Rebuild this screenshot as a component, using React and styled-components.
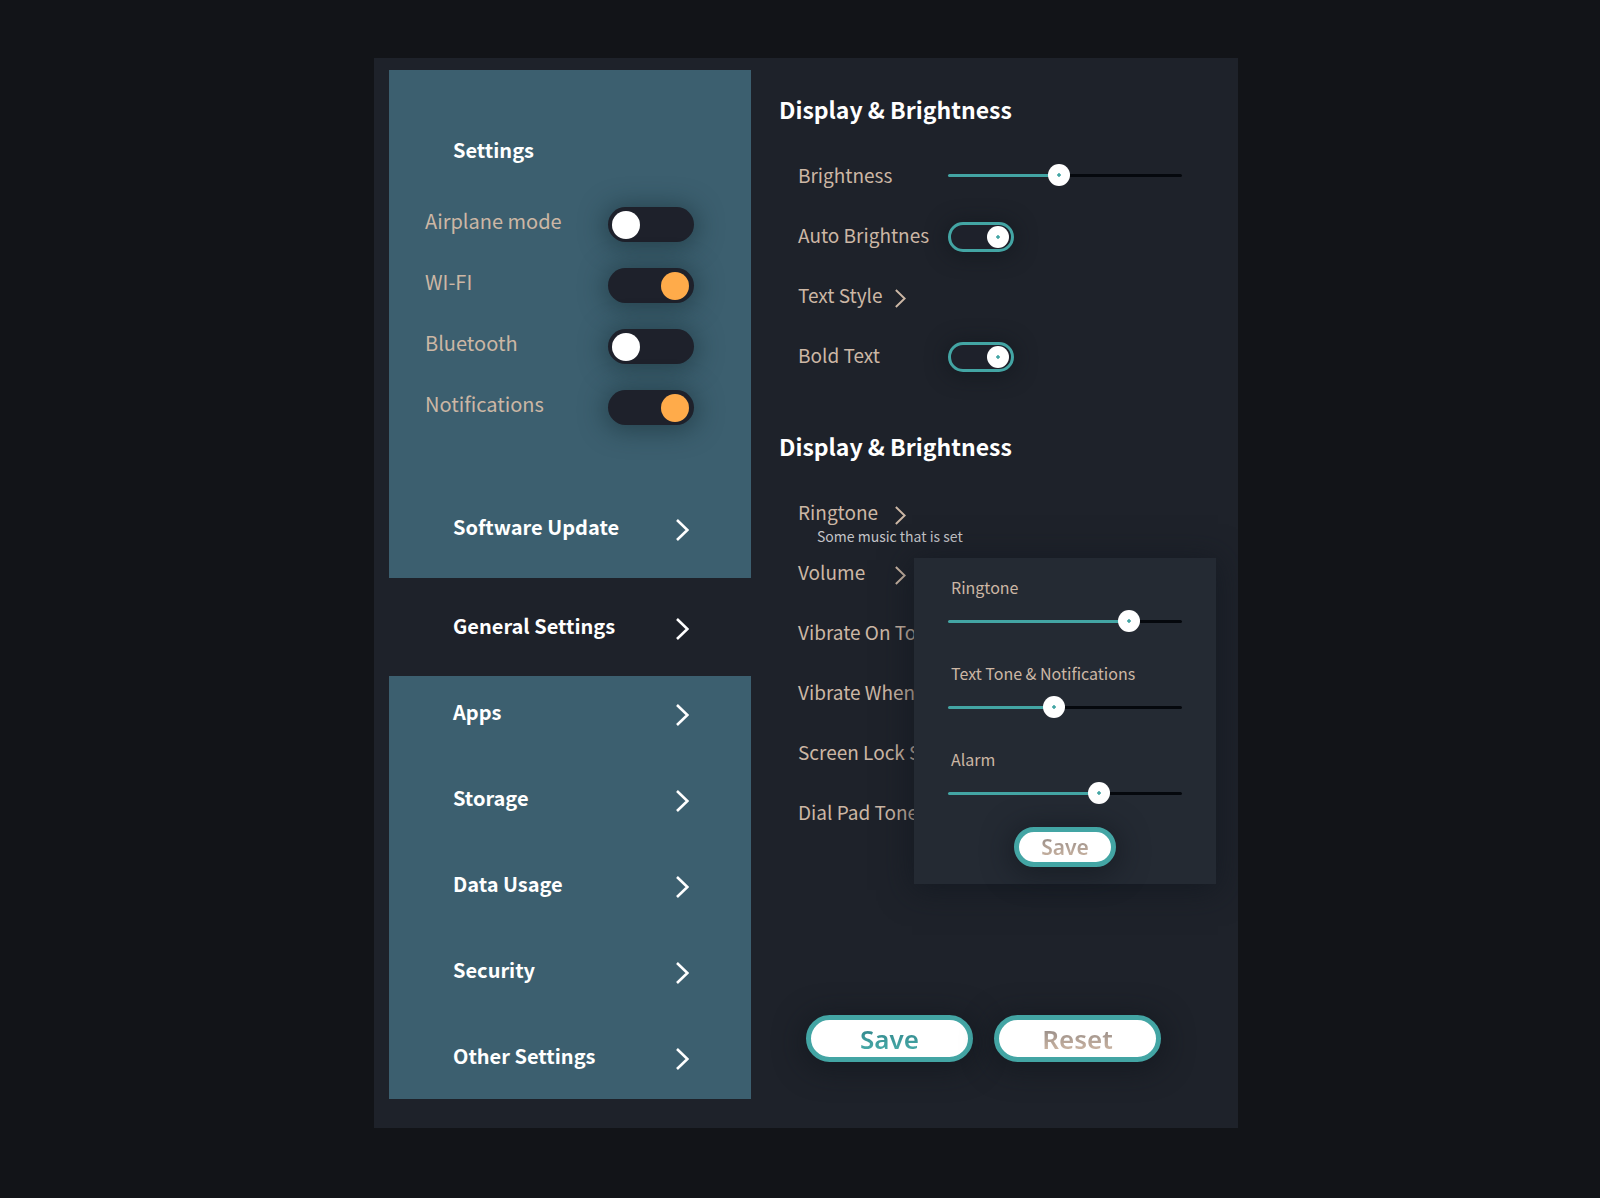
import React, { useId, useState } from "react";
import styled, { createGlobalStyle, css } from "styled-components";

const GlobalStyle = createGlobalStyle`
  *, *::before, *::after { box-sizing: border-box; }
  body {
    margin: 0;
    background: #121418;
    font-family: "Noto Sans CJK SC", "Noto Sans", sans-serif;
    color: #ccb7a5;
  }
  h1, h2, p, ul { margin: 0; padding: 0; }
  ul { list-style: none; }
  button, input { font: inherit; }
`;

const Page = styled.main`
  display: flex;
  justify-content: center;
  min-height: 100vh;
  padding: 58px 0 70px 12px;
`;

const Window = styled.div`
  display: flex;
  align-items: stretch;
  gap: 28px;
  width: 100%;
  max-width: 864px;
  padding: 12px 0 29px 15px;
  overflow: hidden;
  background: #1e222a;
`;

const Sidebar = styled.nav`
  display: flex;
  flex-direction: column;
  flex: 0 0 362px;
`;

const Block = styled.div`
  background: ${(p) => (p.$active ? "transparent" : "#3c5f6f")};
  padding: ${(p) => p.$pad};
`;

const SidebarTitle = styled.h1`
  padding-left: 64px;
  font-size: 20px;
  line-height: 28px;
  font-weight: 700;
  color: #fff;
`;

const ToggleList = styled.ul`
  padding: 30px 57px 75px 36px;
`;

const ToggleRow = styled.li`
  display: flex;
  align-items: center;
  justify-content: space-between;
  height: 61px;
`;

const ToggleLabel = styled.label`
  padding-bottom: 8px;
  font-size: 20px;
  line-height: 28px;
`;

const Switch = styled.input.attrs({ type: "checkbox", role: "switch" })`
  appearance: none;
  display: flex;
  align-items: center;
  flex: none;
  margin: 0;
  border-radius: 24px;
  background: #1e212b;
  cursor: pointer;

  &::before {
    content: "";
    border-radius: 50%;
    background: #fff;
  }
  &:checked {
    justify-content: flex-end;
  }
`;

const SolidSwitch = styled(Switch)`
  width: 86px;
  height: 35px;
  padding: 0 5px 0 4px;
  box-shadow: 0 2px 24px 4px rgba(22, 45, 52, 0.55);

  &::before {
    width: 28px;
    height: 28px;
  }
  &:checked::before {
    background: #ffab4a;
  }
`;

const knobDot = "radial-gradient(circle, #43a5a4 1px, #8fcac9 2px, #fff 2px)";

const OutlineSwitch = styled(Switch)`
  width: 66px;
  height: 30px;
  margin-top: 3px;
  padding: 0 2px;
  border: 3px solid #43a5a4;
  box-shadow: 0 2px 20px 2px rgba(16, 22, 28, 0.6);

  &::before {
    width: 22px;
    height: 22px;
    background: ${knobDot};
  }
`;

const NavList = styled.ul`
  display: flex;
  flex-direction: column;
  gap: 58px;
`;

const NavLink = styled.a`
  display: flex;
  align-items: center;
  justify-content: space-between;
  padding: 0 62px 0 64px;
  font-size: 20px;
  line-height: 28px;
  font-weight: 700;
  color: #fff;
  text-decoration: none;
`;

const ChevronSvg = styled.svg`
  flex: none;
  width: ${(p) => (p.$small ? 11 : 13)}px;
  height: ${(p) => (p.$small ? 19 : 22)}px;
  margin-top: 6px;
  fill: none;
  stroke: currentColor;
  stroke-width: ${(p) => (p.$small ? 2.3 : 2.6)};
`;

const Content = styled.div`
  display: flex;
  flex: 1;
  flex-direction: column;
  min-width: 0;
  padding: 23px 0 37px;
`;

const Heading = styled.h2`
  font-size: 23px;
  line-height: 32px;
  font-weight: 700;
  color: #fff;
`;

const SecondHeading = styled(Heading)`
  margin-top: 45px;
`;

const Rows = styled.div`
  position: relative;
  padding: 20px 22px 0 19px;
`;

const rowText = css`
  font-size: 19px;
  line-height: 26px;
  color: #ccb7a5;
`;

const Row = styled.div`
  display: flex;
  align-items: center;
  height: 60px;
`;

const RowLabel = styled.label`
  ${rowText}
  flex: 0 0 150px;
  white-space: nowrap;
`;

const RowText = styled.span`
  ${rowText}
  white-space: nowrap;
`;

const RowLink = styled.a`
  ${rowText}
  display: flex;
  align-items: center;
  justify-content: space-between;
  width: 108px;
  text-decoration: none;
`;

const RowWithNote = styled.div`
  position: relative;
`;

const Note = styled.p`
  position: absolute;
  left: 19px;
  top: 44px;
  font-size: 14px;
  line-height: 20px;
  color: #c3c4c8;
`;

const Range = styled.input.attrs({ type: "range" })`
  appearance: none;
  display: block;
  width: 234px;
  height: 22px;
  margin: 0;
  background: transparent;
  cursor: pointer;

  &::-webkit-slider-runnable-track {
    height: 3px;
    border-radius: 2px;
    background: linear-gradient(
      to right,
      #43a5a4 var(--fill),
      #05080d var(--fill)
    );
  }
  &::-webkit-slider-thumb {
    appearance: none;
    width: 22px;
    height: 22px;
    margin-top: -10px;
    border-radius: 50%;
    background: ${knobDot};
  }
`;

const Popup = styled.section`
  position: absolute;
  top: 96px;
  right: 22px;
  display: flex;
  flex-direction: column;
  gap: 23px;
  width: 302px;
  padding: 16px 34px 17px;
  background: #242a33;
  box-shadow: 0 4px 30px 2px rgba(17, 23, 31, 0.7);
`;

const PopupFields = styled.div`
  display: flex;
  flex-direction: column;
  gap: 28px;
`;

const PopupLabel = styled.label`
  display: block;
  padding-left: 3px;
  margin-bottom: 10px;
  font-size: 16px;
  line-height: 26px;
`;

const Pill = styled.button`
  display: flex;
  align-items: center;
  justify-content: center;
  width: ${(p) => (p.$small ? 102 : 167)}px;
  height: ${(p) => (p.$small ? 40 : 47)}px;
  align-self: center;
  padding: 0;
  border: 5px solid #43a5a4;
  border-radius: 24px;
  background: #fff;
  box-shadow: 0 4px 28px 4px rgba(16, 22, 28, 0.6);
  font-family: "Noto Sans", sans-serif;
  font-size: ${(p) => (p.$small ? 21 : 26)}px;
  line-height: 30px;
  font-weight: 600;
  cursor: pointer;
`;

const PillText = styled.span`
  background: ${(p) =>
    p.$primary
      ? "linear-gradient(#2d7f86, #4bb0ac)"
      : "linear-gradient(#8d8583, #d3baa5)"};
  background-clip: text;
  color: transparent;
`;

const Actions = styled.div`
  display: flex;
  gap: 21px;
  margin-top: auto;
  padding-left: 27px;
`;

function Chevron({ small }) {
  return (
    <ChevronSvg $small={small} viewBox="0 0 13 22" aria-hidden="true">
      <path d="M1 1 L11.4 11 L1 21" />
    </ChevronSvg>
  );
}

function SidebarToggle({ label, on }) {
  const id = useId();
  return (
    <ToggleRow>
      <ToggleLabel htmlFor={id}>{label}</ToggleLabel>
      <SolidSwitch id={id} defaultChecked={on} />
    </ToggleRow>
  );
}

function NavItem({ children }) {
  return (
    <NavLink href="#">
      {children}
      <Chevron />
    </NavLink>
  );
}

function Slider({ id, initial }) {
  const [value, setValue] = useState(initial);
  return (
    <Range
      id={id}
      value={value}
      onChange={(e) => setValue(Number(e.target.value))}
      style={{ "--fill": `${value}%` }}
    />
  );
}

function SwitchRow({ label }) {
  const id = useId();
  return (
    <Row>
      <RowLabel htmlFor={id}>{label}</RowLabel>
      <OutlineSwitch id={id} defaultChecked />
    </Row>
  );
}

function SliderRow({ label, initial }) {
  const id = useId();
  return (
    <Row>
      <RowLabel htmlFor={id}>{label}</RowLabel>
      <Slider id={id} initial={initial} />
    </Row>
  );
}

function LinkRow({ label }) {
  return (
    <Row>
      <RowLink href="#">
        {label}
        <Chevron small />
      </RowLink>
    </Row>
  );
}

function VolumeField({ label, initial }) {
  const id = useId();
  return (
    <div>
      <PopupLabel htmlFor={id}>{label}</PopupLabel>
      <Slider id={id} initial={initial} />
    </div>
  );
}

const toggles = [
  { label: "Airplane mode", on: false },
  { label: "WI-FI", on: true },
  { label: "Bluetooth", on: false },
  { label: "Notifications", on: true },
];

const links = ["Apps", "Storage", "Data Usage", "Security", "Other Settings"];

const sounds = ["Vibrate On To", "Vibrate When", "Screen Lock S", "Dial Pad Tone"];

export default function App() {
  return (
    <>
      <GlobalStyle />
      <Page>
        <Window>
          <Sidebar>
            <Block $pad="66px 0 37px">
              <SidebarTitle>Settings</SidebarTitle>
              <ToggleList>
                {toggles.map((t) => (
                  <SidebarToggle key={t.label} {...t} />
                ))}
              </ToggleList>
              <NavItem>Software Update</NavItem>
            </Block>
            <Block $active $pad="34px 0 36px">
              <NavItem>General Settings</NavItem>
            </Block>
            <Block $pad="22px 0 29px">
              <NavList>
                {links.map((name) => (
                  <li key={name}>
                    <NavItem>{name}</NavItem>
                  </li>
                ))}
              </NavList>
            </Block>
          </Sidebar>
          <Content>
            <Heading>Display &amp; Brightness</Heading>
            <Rows>
              <SliderRow label="Brightness" initial={47} />
              <SwitchRow label="Auto Brightnes" />
              <LinkRow label="Text Style" />
              <SwitchRow label="Bold Text" />
            </Rows>
            <SecondHeading>Display &amp; Brightness</SecondHeading>
            <Rows>
              <RowWithNote>
                <LinkRow label="Ringtone" />
                <Note>Some music that is set</Note>
              </RowWithNote>
              <LinkRow label="Volume" />
              {sounds.map((name) => (
                <Row key={name}>
                  <RowText>{name}</RowText>
                </Row>
              ))}
              <Popup aria-label="Volume">
                <PopupFields>
                  <VolumeField label="Ringtone" initial={80} />
                  <VolumeField label="Text Tone & Notifications" initial={45} />
                  <VolumeField label="Alarm" initial={66} />
                </PopupFields>
                <Pill $small type="button">
                  <PillText>Save</PillText>
                </Pill>
              </Popup>
            </Rows>
            <Actions>
              <Pill type="button">
                <PillText $primary>Save</PillText>
              </Pill>
              <Pill type="button">
                <PillText>Reset</PillText>
              </Pill>
            </Actions>
          </Content>
        </Window>
      </Page>
    </>
  );
}
